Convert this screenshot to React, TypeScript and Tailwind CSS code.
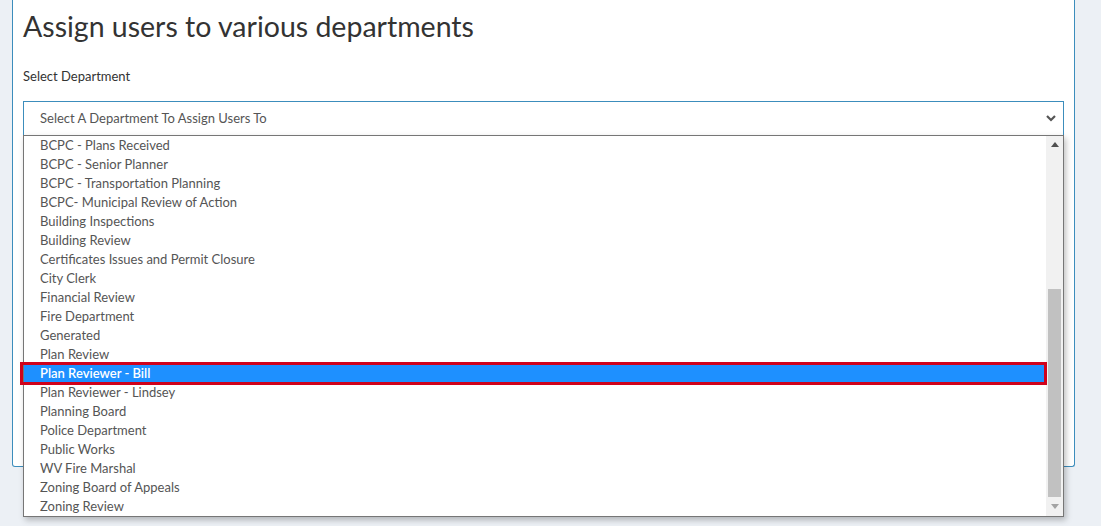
import React from "react";

const departments = [
  "BCPC - Plans Received",
  "BCPC - Senior Planner",
  "BCPC - Transportation Planning",
  "BCPC- Municipal Review of Action",
  "Building Inspections",
  "Building Review",
  "Certificates Issues and Permit Closure",
  "City Clerk",
  "Financial Review",
  "Fire Department",
  "Generated",
  "Plan Review",
  "Plan Reviewer - Bill",
  "Plan Reviewer - Lindsey",
  "Planning Board",
  "Police Department",
  "Public Works",
  "WV Fire Marshal",
  "Zoning Board of Appeals",
  "Zoning Review",
];

const selected = "Plan Reviewer - Bill";

function Scrollbar() {
  return (
    <div className="flex w-[17px] shrink-0 flex-col bg-[#f1f1f1]">
      <div className="flex h-[17px] items-center justify-center">
        <svg width="8" height="5" viewBox="0 0 8 5">
          <path d="M0 5 L4 0 L8 5 Z" fill="#505050" />
        </svg>
      </div>
      <div className="h-[136px]" />
      <div className="mx-[2px] h-[208px] bg-[#c1c1c1]" />
      <div className="flex flex-1 items-center justify-center">
        <svg width="8" height="5" viewBox="0 0 8 5">
          <path d="M0 0 L8 0 L4 5 Z" fill="#a3a3a3" />
        </svg>
      </div>
    </div>
  );
}

export default function App() {
  return (
    <div
      className="min-h-screen bg-[#ecf0f5] pl-3 pr-[26px]"
      style={{ fontFamily: "Lato, 'Liberation Sans', sans-serif" }}
    >
      <div className="h-[467px] rounded-b-[3px] border-x border-b border-[#3c8dbc] bg-white px-[10px]">
        <h1 className="pt-[8px] text-[28.5px] leading-[36px] text-[#333]">
          Assign users to various departments
        </h1>
        <label className="mt-[23px] block text-[13px] leading-[18px] text-[#333]">
          Select Department
        </label>

        <div className="relative mt-[16px]">
          <div className="flex h-[35px] items-center justify-between border border-[#3c8dbc] pl-[16px] pr-[7px] text-[13px] text-[#555]">
            <span>Select A Department To Assign Users To</span>
            <svg width="10" height="7" viewBox="0 0 10 7">
              <path d="M1 1 L5 5 L9 1" fill="none" stroke="#555" strokeWidth="2.2" />
            </svg>
          </div>

          <div className="absolute left-0 right-0 top-[calc(100%-1px)] z-10 flex border border-[#767676] bg-white shadow-[2px_3px_6px_rgba(0,0,0,0.25)]">
            <ul className="flex-1">
              {departments.map((d) =>
                d === selected ? (
                  <li
                    key={d}
                    className="relative flex h-[19px] items-center bg-[#1e90ff] pl-[16px] text-[13px] font-semibold text-white"
                  >
                    {d}
                    <span className="pointer-events-none absolute -bottom-[2px] -left-[4px] -right-[1px] -top-[2px] border-[3px] border-[#d0021b]" />
                  </li>
                ) : (
                  <li
                    key={d}
                    className="flex h-[19px] items-center pl-[16px] text-[13px] text-[#555]"
                  >
                    {d}
                  </li>
                )
              )}
            </ul>
            <Scrollbar />
          </div>
        </div>
      </div>
    </div>
  );
}
